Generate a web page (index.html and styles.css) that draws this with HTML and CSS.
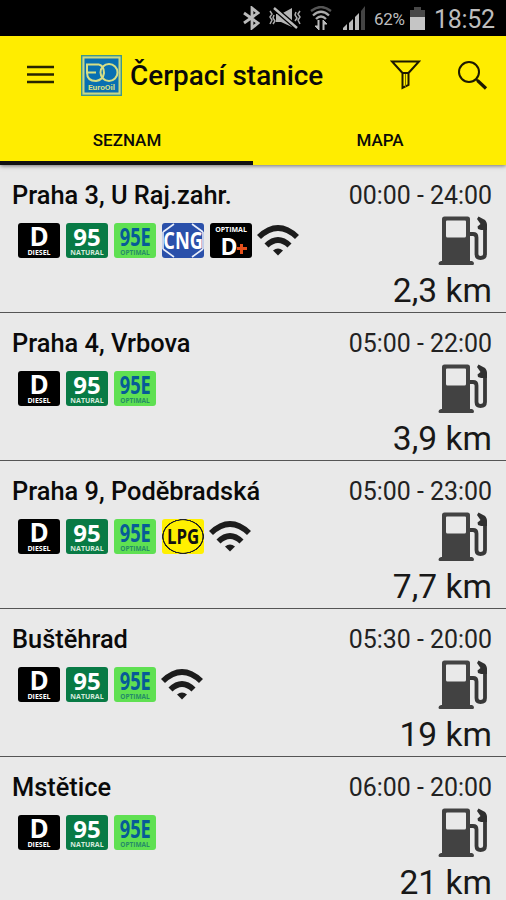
FILE: index.html
```html
<!DOCTYPE html>
<html lang="cs">
<head>
<meta charset="utf-8">
<title>Čerpací stanice</title>
<link rel="stylesheet" href="styles.css">
</head>
<body>

<!-- icons used more than once -->
<svg class="symbols">
  <symbol id="wifi" viewBox="0 0 42 35">
    <g fill="none" stroke="#1c1c1c" stroke-width="5.800">
      <path d="M2 14Q21 -4 40 14"/>
      <path d="M9.500 22.500Q21 11.500 32.500 22.500"/>
    </g>
    <path d="M16 27.500Q21 23.500 26 27.500L21 32.500Z" fill="#1c1c1c"/>
  </symbol>
  <symbol id="pump" viewBox="0 0 50 50">
    <path d="M4 3Q4 0.500 6.500 0.500H29.500Q32 0.500 32 3V45H34Q36 45.500 36 47.500Q36 49 34.500 49H2Q0.500 49 0.500 47.500Q0.500 45.500 3 45H4ZM8 5.500V20Q8 21.500 9.500 21.500H26.500Q28 21.500 28 20V5.500Q28 4.500 27 4.500H9Q8 4.500 8 5.500Z" fill="#424242" fill-rule="evenodd"/>
    <path d="M32 18H35Q38.500 18 38.500 21.500V38Q38.500 42 42.500 42Q47 42 47 38V9Q47 7 45 5" fill="none" stroke="#383838" stroke-width="3.800"/>
    <path d="M40.500 0.500L47 4Q49 6 49 9V14H43L40 13L39.500 10.500L42.500 8L39 3Z" fill="#303030"/>
  </symbol>
</svg>

<div class="statusbar">
  <svg class="bluetooth" width="17" height="24" viewBox="0 0 17 24">
    <path d="M1 7L15 17L9 22V2L15 7L1 17" fill="none" stroke="#bbb" stroke-width="2.800"/>
  </svg>
  <svg class="mute" width="34" height="22" viewBox="0 0 34 22">
    <path d="M8 7H13L24 1V20L13 15H8Z" fill="#b5b5b5"/>
    <path d="M6 1L29 21" stroke="#000" stroke-width="5"/>
    <path d="M6 1L29 21" stroke="#bbb" stroke-width="2.400"/>
    <path d="M2 4L4 7L2 10L4 13L2 17M6 8L5 11L7 14L5 17M32 4L30 7L32 10L30 13L32 17M28 5L27 8L29 11L27 14" fill="none" stroke="#aaa" stroke-width="1.500"/>
  </svg>
  <svg class="net" width="22" height="24" viewBox="0 0 22 24">
    <g fill="none" stroke="#aaa" stroke-width="2.300">
      <path d="M1 5Q11 -3 21 5" stroke="#555"/>
      <path d="M3 9.500Q11 2 19 9.500M6 13Q11 8 16 13"/>
    </g>
    <path d="M8 14V20H5L9 24V14M14 24V18H17L13 14V24" fill="#bbb" stroke="#bbb"/>
  </svg>
  <svg class="signal" width="24" height="24" viewBox="0 0 24 24">
    <path d="M1 24V22L5 18V24ZM7 24V17L11 13V24ZM13 24V11L17 7V24Z" fill="#bbb"/>
    <path d="M19 24V5L23 0V24Z" fill="#444"/>
  </svg>
  <span class="percent">62%</span>
  <svg class="battery" width="15" height="23" viewBox="0 0 15 23">
    <path d="M0 3H4V0H11V3H15V11H0Z" fill="#484848"/>
    <path d="M0 10H15V23H0Z" fill="#c5c5c5"/>
  </svg>
  <span class="clock">18:52</span>
</div>

<div class="header">
  <div class="toolbar">
    <svg class="menu" width="27" height="20" viewBox="0 0 27 20">
      <path d="M0 2H27M0 9.500H27M0 17H27" stroke="#282500" stroke-width="2.600"/>
    </svg>
    <svg class="logo" width="41" height="41" viewBox="0 0 41 41">
      <rect x=".7" y=".7" width="39.600" height="39.600" fill="#c8d985" stroke="#3f978b" stroke-width="1.400"/>
      <rect x="3.500" y="3.500" width="34" height="34" fill="#0870b2"/>
      <g fill="none" stroke="#d5df86" stroke-width="2">
        <path d="M18 9.500H6V17.500H15M6 17.500Q6 26 15 26Q22 25 23 18Q23 11 18 9.500"/>
        <ellipse cx="28" cy="17.500" rx="8.500" ry="8.500"/>
      </g>
      <text x="7" y="35" font-size="8" font-weight="bold" textLength="27" lengthAdjust="spacingAndGlyphs" fill="#d5df86">EuroOil</text>
    </svg>
    <h1>Čerpací stanice</h1>
    <svg class="filter" width="31" height="30" viewBox="0 0 31 30">
      <path d="M2 1.500H29L18.500 13V25L12.500 28V13ZM12 13H19" fill="none" stroke="#1c1900" stroke-width="2"/>
      <path d="M15.500 14V27" stroke="#777000"/>
    </svg>
    <svg class="search" width="31" height="31" viewBox="0 0 31 31">
      <circle cx="12" cy="12" r="10" fill="none" stroke="#1c1900" stroke-width="2"/>
      <path d="M19 19L21 21" stroke="#1c1900" stroke-width="2"/>
      <path d="M20.500 20.500L29 28.500" stroke="#1c1900" stroke-width="3.200"/>
    </svg>
  </div>
  <div class="tabs">
    <div class="tab active">SEZNAM</div>
    <div class="tab">MAPA</div>
  </div>
</div>

<div class="list">
  <div class="station">
    <div class="info">
      <div class="name">Praha 3, U Raj.zahr.</div>
      <div class="fuels">
        <div class="fuel diesel"><b>D</b><small>DIESEL</small></div>
        <div class="fuel natural"><b>95</b><small>NATURAL</small></div>
        <div class="fuel optimal"><b>95E</b><small>OPTIMAL</small></div>
        <div class="fuel cng">
          <svg viewBox="0 0 42 35">
            <path d="M1 9L12 1M30 1L41 9M41 26L30 34M12 34L1 26M1 9V26M41 9V26" fill="none" stroke="#e8eefa" stroke-width="1.600"/>
          </svg>
          <b>CNG</b>
        </div>
        <div class="fuel dplus"><small>OPTIMAL</small><b>D<i></i></b></div>
        <svg class="wifi"><use href="#wifi"/></svg>
      </div>
    </div>
    <div class="side">
      <div class="hours">00:00 - 24:00</div>
      <svg class="pump"><use href="#pump"/></svg>
      <div class="distance">2,3 km</div>
    </div>
  </div>

  <div class="station">
    <div class="info">
      <div class="name">Praha 4, Vrbova</div>
      <div class="fuels">
        <div class="fuel diesel"><b>D</b><small>DIESEL</small></div>
        <div class="fuel natural"><b>95</b><small>NATURAL</small></div>
        <div class="fuel optimal"><b>95E</b><small>OPTIMAL</small></div>
      </div>
    </div>
    <div class="side">
      <div class="hours">05:00 - 22:00</div>
      <svg class="pump"><use href="#pump"/></svg>
      <div class="distance">3,9 km</div>
    </div>
  </div>

  <div class="station">
    <div class="info">
      <div class="name">Praha 9, Poděbradská</div>
      <div class="fuels">
        <div class="fuel diesel"><b>D</b><small>DIESEL</small></div>
        <div class="fuel natural"><b>95</b><small>NATURAL</small></div>
        <div class="fuel optimal"><b>95E</b><small>OPTIMAL</small></div>
        <div class="fuel lpg"><b>LPG</b></div>
        <svg class="wifi"><use href="#wifi"/></svg>
      </div>
    </div>
    <div class="side">
      <div class="hours">05:00 - 23:00</div>
      <svg class="pump"><use href="#pump"/></svg>
      <div class="distance">7,7 km</div>
    </div>
  </div>

  <div class="station">
    <div class="info">
      <div class="name">Buštěhrad</div>
      <div class="fuels">
        <div class="fuel diesel"><b>D</b><small>DIESEL</small></div>
        <div class="fuel natural"><b>95</b><small>NATURAL</small></div>
        <div class="fuel optimal"><b>95E</b><small>OPTIMAL</small></div>
        <svg class="wifi"><use href="#wifi"/></svg>
      </div>
    </div>
    <div class="side">
      <div class="hours">05:30 - 20:00</div>
      <svg class="pump"><use href="#pump"/></svg>
      <div class="distance">19 km</div>
    </div>
  </div>

  <div class="station">
    <div class="info">
      <div class="name">Mstětice</div>
      <div class="fuels">
        <div class="fuel diesel"><b>D</b><small>DIESEL</small></div>
        <div class="fuel natural"><b>95</b><small>NATURAL</small></div>
        <div class="fuel optimal"><b>95E</b><small>OPTIMAL</small></div>
      </div>
    </div>
    <div class="side">
      <div class="hours">06:00 - 20:00</div>
      <svg class="pump"><use href="#pump"/></svg>
      <div class="distance">21 km</div>
    </div>
  </div>
</div>

</body>
</html>
```
FILE: styles.css
```css
* {
  box-sizing: border-box;
}

body {
  margin: 0;
  height: 900px;
  overflow: hidden;
  background-color: #e9e9e9;
  color: #0a0a0a;
  font-family: Roboto, sans-serif;
}

svg {
  display: block;
  flex: none;
}

.symbols {
  width: 0;
  height: 0;
}

/* status bar */
.statusbar {
  display: flex;
  align-items: center;
  justify-content: flex-end;
  height: 36px;
  padding-right: 11px;
  background-color: #000;
  color: #bdbdbd;
}

.mute {
  margin-left: 8px;
}

.net {
  margin-left: 8px;
}

.signal {
  margin-left: 10px;
}

.percent {
  width: 31px;
  margin-left: 8px;
  padding-top: 1px;
  font-size: 17px;
  letter-spacing: -0.3px;
  white-space: nowrap;
}

.battery {
  margin-left: 5px;
}

.clock {
  width: 61px;
  margin-left: 9px;
  padding-top: 4px;
  font-size: 25px;
  letter-spacing: -0.3px;
  line-height: 30px;
}

/* header */
.header {
  position: relative;
  height: 129px;
  background-color: #ffed00;
  box-shadow: 0 1px 4px rgba(0, 0, 0, 0.5);
}

.toolbar {
  display: flex;
  align-items: center;
  height: 78px;
  padding: 0 18px 0 27px;
}

.logo {
  margin-left: 27px;
}

h1 {
  flex: 1;
  margin: 2px 0 0 8px;
  font-size: 27.9px;
  font-weight: 500;
  line-height: 40px;
  white-space: nowrap;
}

.search {
  margin-left: 36px;
}

.tabs {
  display: flex;
  height: 51px;
}

.tab {
  flex: 1;
  padding: 13px 0 0 1px;
  text-align: center;
  font-size: 17px;
  font-weight: 500;
  line-height: 26px;
}

.tab.active {
  border-bottom: 4px solid #111;
}

/* stations */
.station {
  display: flex;
  justify-content: space-between;
  height: 148px;
  padding: 14px 14px 0 12px;
  border-bottom: 1px solid #555;
}

.name {
  padding-top: 1px;
  font-size: 25.4px;
  font-weight: 500;
  line-height: 31px;
  white-space: nowrap;
}

.fuels {
  display: flex;
  gap: 6px;
  padding: 12px 0 0 6px;
}

.wifi {
  width: 42px;
  height: 35px;
  margin-left: -1px;
}

/* fuel badges */
.fuel {
  display: flex;
  flex-direction: column;
  align-items: center;
  width: 42px;
  height: 35px;
  border-radius: 3px;
  color: #fff;
  font-family: "Open Sans", sans-serif;
  text-align: center;
}

.fuel b {
  height: 25px;
  font-size: 26px;
  line-height: 27px;
}

.fuel small {
  font-size: 7px;
  font-weight: bold;
  line-height: 9px;
}

.diesel {
  background-color: #000;
}

.natural {
  background-color: #087a45;
}

.natural b {
  font-size: 24px;
}

.natural small {
  color: #d5eadc;
}

.optimal {
  background-color: #5fe052;
}

.optimal b {
  color: #075b97;
  font-size: 25px;
  transform: scaleX(0.73);
}

.optimal small {
  color: #258c67;
  font-size: 6.5px;
}

.cng {
  display: grid;
  grid-template-columns: 42px;
  justify-items: center;
  background-color: #2a50aa;
}

.cng svg,
.cng b {
  grid-area: 1 / 1;
}

.cng svg {
  width: 42px;
  height: 35px;
}

.cng b {
  height: 35px;
  font-size: 24px;
  line-height: 34px;
  transform: scaleX(0.76);
}

.dplus {
  background-color: #000;
}

.dplus small {
  padding-top: 2px;
}

.dplus b {
  display: flex;
  align-items: center;
  height: 24px;
  font-size: 23px;
  line-height: 24px;
}

.dplus i {
  width: 10px;
  height: 10px;
  margin: 5px -5px 0 -1px;
  background: linear-gradient(#e6501c, #e6501c) center / 10px 3px no-repeat,
    linear-gradient(#e6501c, #e6501c) center / 3px 10px no-repeat;
}

.lpg {
  background: radial-gradient(closest-side, transparent 91%, #222 94%, #222 98%, transparent 100%), #fff000;
  color: #111;
}

.lpg b {
  height: 35px;
  font-size: 21px;
  line-height: 35px;
  transform: scaleX(0.8);
}

.side {
  display: flex;
  flex-direction: column;
  align-items: flex-end;
}

.hours {
  padding-top: 1px;
  color: #222;
  font-size: 24.9px;
  line-height: 31px;
}

.pump {
  width: 50px;
  height: 50px;
  margin: 5px 4px 0 0;
}

.distance {
  color: #181818;
  font-size: 33.6px;
  line-height: 50px;
}
```
